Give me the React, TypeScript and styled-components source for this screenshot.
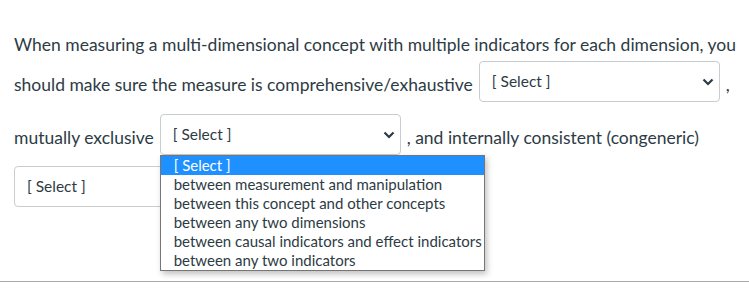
import { ReactElement } from 'react';
import styled, { createGlobalStyle } from 'styled-components';

const GlobalStyle = createGlobalStyle`
  body {
    margin: 0;
    background: #ffffff;
    font-family: Lato, 'Open Sans', sans-serif;
    color: #2d3b45;
  }
`;

const Question = styled.div`
  padding: 35px 14px 0;
  height: 246px;
  border-bottom: 1px solid #aaaaaa;
`;

const Row = styled.div<{ $gap?: number }>`
  display: flex;
  align-items: center;
  margin-top: ${({ $gap }) => $gap ?? 0}px;
  font-size: 17.5px;
  line-height: 20px;
  white-space: nowrap;
`;

const Words = styled.span<{ $drop?: number }>`
  margin-top: ${({ $drop }) => $drop ?? 0}px;
  margin-right: ${({ $drop }) => ($drop ? 6 : 0)}px;
`;

const Trailing = styled.span`
  margin-top: 7px;
  margin-left: 6px;
`;

const SelectWrap = styled.div`
  position: relative;
`;

const SelectBox = styled.div`
  box-sizing: border-box;
  width: 241px;
  height: 41px;
  display: flex;
  align-items: center;
  justify-content: space-between;
  padding: 0 5px 0 12px;
  border: 1px solid #c7cdd1;
  border-radius: 4px;
  background: #ffffff;
  font-size: 15.5px;
`;

const Placeholder = styled.span`
  margin-top: -2px;
`;

const Menu = styled.ul`
  position: absolute;
  top: 41px;
  left: 0;
  z-index: 2;
  box-sizing: border-box;
  width: 325px;
  margin: 0;
  padding: 0;
  list-style: none;
  background: #ffffff;
  border: 1px solid #767676;
  box-shadow: 2px 3px 6px rgba(0, 0, 0, 0.25);
`;

const Option = styled.li<{ $active?: boolean }>`
  height: 19px;
  line-height: 19px;
  padding-left: 13px;
  font-size: 15px;
  color: ${({ $active }) => ($active ? '#ffffff' : '#2d3b45')};
  background: ${({ $active }) => ($active ? '#1e90ff' : 'transparent')};
`;

const options = [
  '[ Select ]',
  'between measurement and manipulation',
  'between this concept and other concepts',
  'between any two dimensions',
  'between causal indicators and effect indicators',
  'between any two indicators',
];

function Chevron(): ReactElement {
  return (
    <svg width="12" height="8" viewBox="0 0 12 8">
      <path d="M1.5 1.5 L6 6 L10.5 1.5" fill="none" stroke="#2d3b45" strokeWidth="2.2" />
    </svg>
  );
}

function Dropdown({ open = false }: { open?: boolean }): ReactElement {
  return (
    <SelectWrap>
      <SelectBox>
        <Placeholder>[ Select ]</Placeholder>
        <Chevron />
      </SelectBox>
      {open && (
        <Menu>
          {options.map((o, i) => (
            <Option key={o} $active={i === 0}>
              {o}
            </Option>
          ))}
        </Menu>
      )}
    </SelectWrap>
  );
}

export default function App(): ReactElement {
  return (
    <>
      <GlobalStyle />
      <Question>
        <Row>When measuring a multi-dimensional concept with multiple indicators for each dimension, you</Row>
        <Row $gap={6}>
          <Words $drop={7}>should make sure the measure is comprehensive/exhaustive</Words>
          <Dropdown />
          <Trailing>,</Trailing>
        </Row>
        <Row $gap={12}>
          <Words $drop={7}>mutually exclusive</Words>
          <Dropdown open />
          <Trailing>, and internally consistent (congeneric)</Trailing>
        </Row>
        <Row $gap={11}>
          <Dropdown />
        </Row>
      </Question>
    </>
  );
}
